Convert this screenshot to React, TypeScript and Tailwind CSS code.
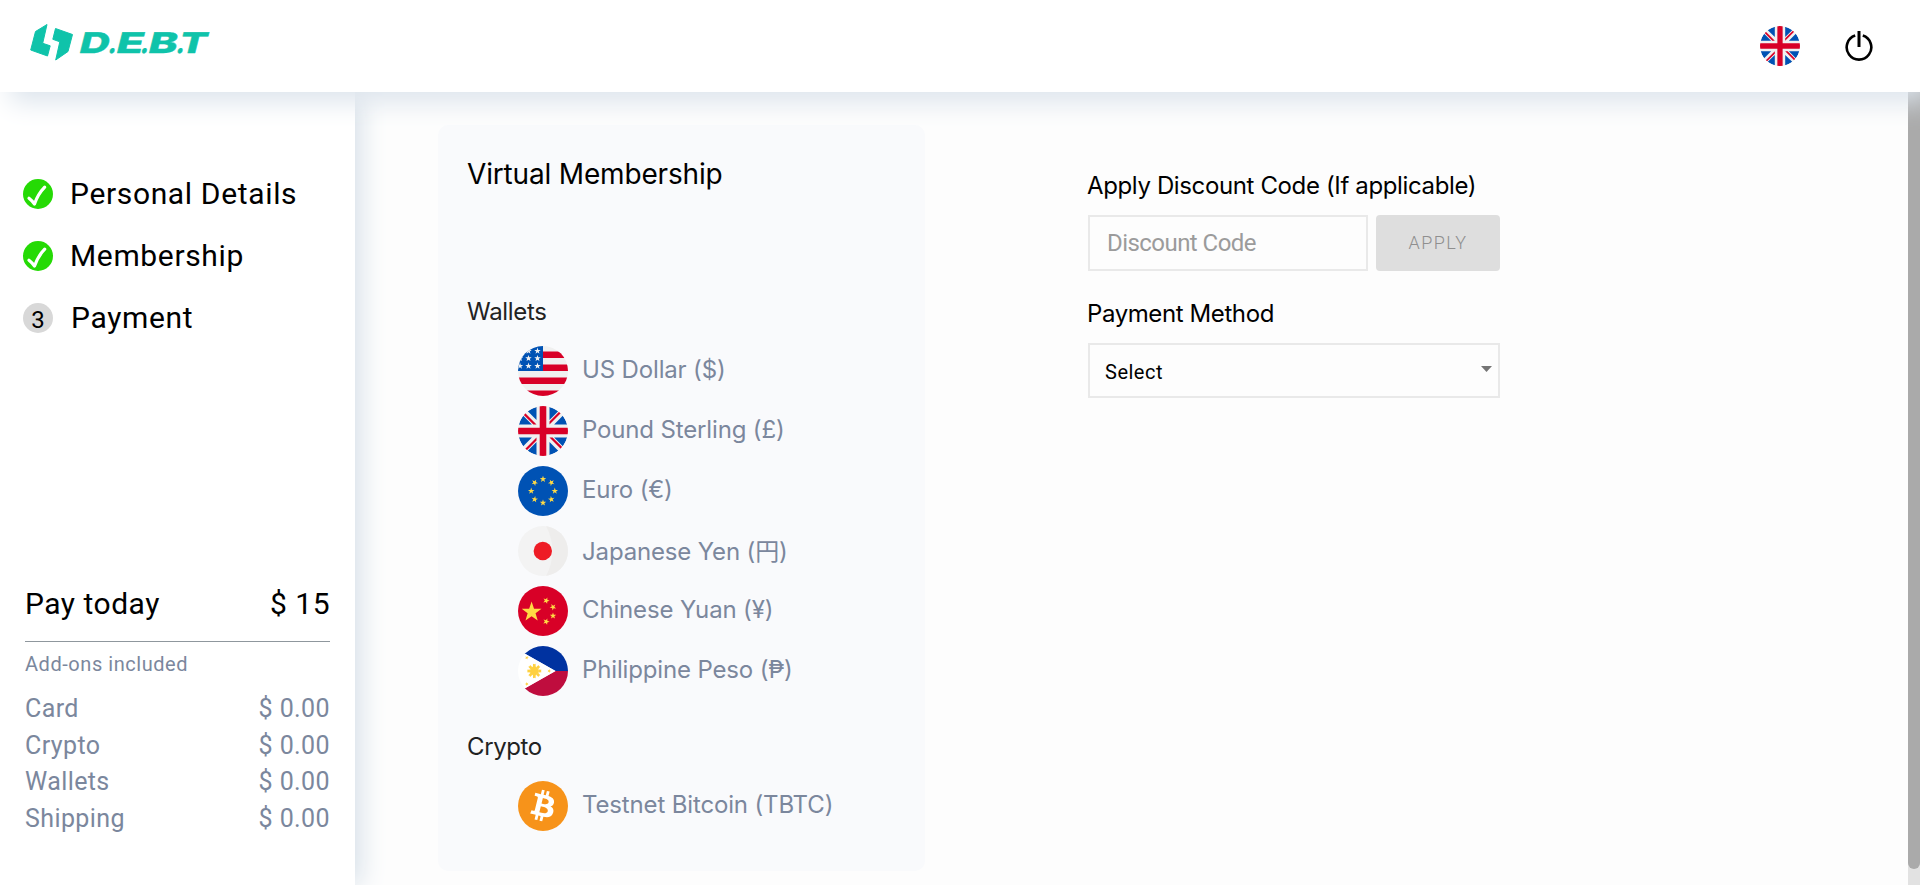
import React from "react";

const star = (cx: number, cy: number, r: number, rot = 0) =>
  Array.from({ length: 10 }, (_, i) => {
    const a = ((i * 36 - 90 + rot) * Math.PI) / 180;
    const q = i % 2 ? r * 0.4 : r;
    return `${cx + q * Math.cos(a)},${cy + q * Math.sin(a)}`;
  }).join(" ");

function Disc({ id, size, children }: { id: string; size: number; children: React.ReactNode }) {
  return (
    <svg width={size} height={size} viewBox="0 0 50 50" className="block shrink-0">
      <clipPath id={id}>
        <circle cx="25" cy="25" r="25" />
      </clipPath>
      <g clipPath={`url(#${id})`}>{children}</g>
    </svg>
  );
}

const UK = ({ id, size = 50 }: { id: string; size?: number }) => (
  <Disc id={id} size={size}>
    <rect width="50" height="50" fill="#f0f0f0" />
    <path fill="#0052b4" d="M5.2 9.8A25 25 0 0 0 0.9 18.5H13.9zM49.1 18.5A25 25 0 0 0 44.8 9.8L36.1 18.5zM0.9 31.5A25 25 0 0 0 5.2 40.2L13.9 31.5zM40.2 5.2A25 25 0 0 0 31.5 0.9V13.9zM9.8 44.8A25 25 0 0 0 18.5 49.1V36.1zM18.5 0.9A25 25 0 0 0 9.8 5.2L18.5 13.9zM31.5 49.1A25 25 0 0 0 40.2 44.8L31.5 36.1zM36.1 31.5L44.8 40.2A25 25 0 0 0 49.1 31.5z" />
    <path fill="#d80027" d="M21.7 0h6.6v21.7H50v6.6H28.3V50h-6.6V28.3H0v-6.6h21.7z" />
    <path fill="#d80027" d="M31.5 31.5L42.7 42.7L44.2 41.1L34.6 31.5zM18.5 31.5L7.3 42.7L8.9 44.2L18.5 34.6zM18.5 18.5L7.3 7.3L5.8 8.9L15.4 18.5zM31.5 18.5L42.7 7.3L41.1 5.8L31.5 15.4z" />
  </Disc>
);

const US = () => (
  <Disc id="us" size={50}>
    <rect width="50" height="50" fill="#f0f0f0" />
    <path fill="#d80027" d="M23 5.4h27v6.6H23zM23 18.4h27v6.6H23zM0 31.5h50v6.5H0zM0 44.5h50V50H0z" />
    <rect width="25" height="25" fill="#0052b4" />
    <g fill="#f0f0f0">
      {[[10.5, 5], [19.5, 5], [2, 12.3], [10.5, 12.3], [19.5, 12.3], [2, 20], [10.5, 20], [19.5, 20]].map(([x, y], i) => (
        <polygon key={i} points={star(x, y, 3.4)} />
      ))}
    </g>
  </Disc>
);

const EU = () => (
  <Disc id="eu" size={50}>
    <rect width="50" height="50" fill="#0052b4" />
    <g fill="#ffda44">
      {[0, 45, 90, 135, 180, 225, 270, 315].map((d) => (
        <polygon key={d} points={star(25 + 11.8 * Math.sin((d * Math.PI) / 180), 25 - 11.8 * Math.cos((d * Math.PI) / 180), 3.4, d % 90 ? d : 0)} />
      ))}
    </g>
  </Disc>
);

const JP = () => (
  <Disc id="jp" size={50}>
    <rect width="50" height="50" fill="#f3f3f3" />
    <path d="M28 0Q41 25 28 50H50V0z" fill="#eeedec" />
    <circle cx="24.8" cy="25" r="9.2" fill="#ee1c25" />
  </Disc>
);

const CN = () => (
  <Disc id="cn" size={50}>
    <rect width="50" height="50" fill="#d80027" />
    <g fill="#ffda44">
      <polygon points={star(13.6, 26, 10.4)} />
      <polygon points={star(28.2, 14.6, 3.4, 20)} />
      <polygon points={star(35, 21, 3.4, 42)} />
      <polygon points={star(35, 29.8, 3.4, 0)} />
      <polygon points={star(28.2, 35.6, 3.4, 20)} />
    </g>
  </Disc>
);

const PH = () => (
  <Disc id="ph" size={50}>
    <path d="M0 0H50V25H37.5L0 3.8z" fill="#0032a0" />
    <path d="M0 50H50V25H37.5L0 46.2z" fill="#bf0d3e" />
    <path d="M0 3.8L37.5 25L0 46.2z" fill="#fff" />
    <g fill="#fed141">
      <circle cx="16.3" cy="25" r="4.4" />
      {[0, 45, 90, 135, 180, 225, 270, 315].map((d) => (
        <path key={d} transform={`rotate(${d} 16.3 25)`} d="M14.9 21L15 17.8L16.3 18.3L17.6 17.8L17.7 21z" />
      ))}
      <polygon points={star(8.8, 11.7, 2, 20)} />
      <polygon points={star(8.8, 38, 2, -20)} />
      <polygon points={star(31.2, 25, 2, 18)} />
    </g>
  </Disc>
);

const BTC = () => (
  <svg width="50" height="50" viewBox="0 0 64 64" className="block shrink-0">
    <circle cx="32" cy="32" r="32" fill="#f7931a" />
    <path
      fill="#fff"
      d="M46.1 27.4c.64-4.26-2.6-6.55-7.04-8.08l1.44-5.76-3.51-.87-1.4 5.61c-.92-.23-1.87-.45-2.81-.66l1.41-5.65-3.5-.87-1.44 5.76c-.76-.17-1.51-.35-2.24-.53l-4.84-1.21-.93 3.75s2.6.6 2.55.63c1.42.35 1.68 1.29 1.63 2.04l-3.93 15.78c-.17.43-.62 1.08-1.61.83.04.05-2.55-.64-2.55-.64l-1.74 4.02 4.56 1.14c.85.21 1.68.43 2.5.64l-1.45 5.83 3.5.87 1.44-5.76c.96.26 1.88.5 2.79.72l-1.43 5.74 3.51.87 1.45-5.81c5.98 1.13 10.48.67 12.37-4.74 1.53-4.35-.07-6.87-3.22-8.5 2.29-.53 4.02-2.04 4.48-5.15zM38.1 38.63c-1.09 4.36-8.42 2-10.8 1.41l1.93-7.73c2.38.6 10 1.77 8.87 6.32zM39.18 27.34c-.99 3.96-7.09 1.95-9.07 1.46l1.75-7.01c1.98.49 8.36 1.41 7.32 5.55z"
    />
  </svg>
);

const wordmark: [string, number, number][] = [
  ["D", -2, 30],
  [".", 27.6, 8.5],
  ["E", 35, 27],
  [".", 59.8, 8.5],
  ["B", 67, 29],
  [".", 95.6, 8.5],
  ["T", 97.5, 28],
];

const Logo = () => (
  <svg width="190" height="40" viewBox="0 0 190 40" className="block" fill="#0fc3aa" stroke="#0fc3aa" strokeLinejoin="round">
    <path d="M17 1.5L5.5 8.5L0.7 27L17.5 33L20.2 22.8L12.7 20.3z" strokeWidth="1" />
    <path d="M25.5 5.5L42.5 11.5L38 28.5L25.7 37L29.8 18.8L22.8 16.3z" strokeWidth="1" />
    <g transform="translate(49.7 29.8) skewX(-14)" className="font-['Inter',sans-serif] text-[28.5px] font-extrabold" strokeWidth="0.4">
      {wordmark.map(([c, x, w]) => (
        <text key={x} x={x} textLength={w} lengthAdjust="spacingAndGlyphs">{c}</text>
      ))}
    </g>
  </svg>
);

function Check() {
  return (
    <svg width="30" height="30" viewBox="0 0 30 30" className="block shrink-0">
      <circle cx="15" cy="15" r="15" fill="#25da05" />
      <path d="M6 19.2Q9 21.5 11.5 25Q15 15 21.7 8.2" fill="none" stroke="#fff" strokeWidth="3.2" strokeLinecap="round" strokeLinejoin="round" />
    </svg>
  );
}

const wallets = [
  { icon: <US />, label: "US Dollar ($)" },
  { icon: <UK id="gb" />, label: "Pound Sterling (£)" },
  { icon: <EU />, label: "Euro (€)" },
  { icon: <JP />, label: "Japanese Yen (円)", low: true },
  { icon: <CN />, label: "Chinese Yuan (¥)" },
  { icon: <PH />, label: "Philippine Peso (₱)" },
];

function Row({ icon, label, low }: { icon: React.ReactNode; label: string; low?: boolean }) {
  return (
    <div className="flex h-[60px] items-start pl-[50px]">
      {icon}
      <span className={`ml-[14px] text-2xl leading-10 tracking-[-0.15px] text-[#7b879d] ${low ? "pt-[6px]" : "pt-[4px]"}`}>{label}</span>
    </div>
  );
}

export default function App() {
  return (
    <div className="flex h-[885px] w-[1920px] flex-col overflow-hidden bg-[#fdfdfd] font-['Inter','Noto_Sans_CJK_JP',sans-serif]">
      <header className="relative z-20 flex h-[92px] shrink-0 items-start justify-between bg-white pl-[30px] shadow-[10px_10px_25px_#dce4ec]">
        <div className="pt-[23px]"><Logo /></div>
        <div className="flex items-start">
          <div className="mr-[45px] mt-[26px]"><UK id="lang" size={40} /></div>
          <svg width="28" height="32" viewBox="0 0 28 32" className="mr-[47px] mt-[30px] block" fill="none" stroke="#000" strokeWidth="2.6">
            <path d="M10.2 5.6A12.3 12.3 0 1 0 17.8 5.6" />
            <path d="M14 1V17" strokeWidth="3" />
          </svg>
        </div>
      </header>
      <div className="flex min-h-0 flex-1">
        <aside className="relative z-10 flex w-[355px] shrink-0 flex-col bg-white shadow-[5px_0_25px_#d5dfe8] font-['Roboto',sans-serif]">
          <ol className="flex flex-col pl-[23px] pt-[71px] text-[30px] leading-[62px] tracking-[0.65px] text-black">
            <li className="flex h-[62px] items-center"><Check /><span className="ml-[17px]">Personal Details</span></li>
            <li className="flex h-[62px] items-center"><Check /><span className="ml-[17px]">Membership</span></li>
            <li className="flex h-[62px] items-center">
              <span className="flex size-[30px] items-center justify-center rounded-full bg-[#d8d8d8] pt-[3px] text-2xl leading-none tracking-normal">3</span>
              <span className="ml-[18px]">Payment</span>
            </li>
          </ol>
          <div className="mt-[214px] pl-[25px] pr-[25px]">
            <div className="flex h-[79px] justify-between border-b border-[#8f979d] text-[30px] leading-[81px] tracking-[0.5px] text-black">
              <span>Pay today</span><span>$ 15</span>
            </div>
            <div className="mt-[7px] text-xl leading-[30px] tracking-[0.55px] text-[#7b879d]">Add-ons included</div>
            <div className="mt-[12px] text-[25px] leading-[36.5px] tracking-[0.4px] text-[#7b879d]">
              {["Card", "Crypto", "Wallets", "Shipping"].map((n) => (
                <div key={n} className="flex justify-between"><span>{n}</span><span>$ 0.00</span></div>
              ))}
            </div>
          </div>
        </aside>
        <main className="flex flex-1 items-start pl-[83px] pt-[33px]">
          <section className="h-[746px] w-[487px] rounded-[10px] bg-[#f9fafc] pl-[30px] pt-[29px]">
            <h1 className="-ml-px text-[28px] leading-10 tracking-[-0.17px] text-black">Virtual Membership</h1>
            <h2 className="-ml-px mt-[98px] text-2xl leading-10 tracking-[-0.3px] text-[#222]">Wallets</h2>
            <div className="mt-[14px]">{wallets.map((w) => <Row key={w.label} {...w} />)}</div>
            <h2 className="-ml-px mt-[21px] text-2xl leading-10 tracking-[-0.4px] text-[#222]">Crypto</h2>
            <div className="mt-[14px]"><Row icon={<BTC />} label="Testnet Bitcoin (TBTC)" /></div>
          </section>
          <section className="ml-[163px] w-[412px] pt-[41px]">
            <label className="-ml-px block text-2xl leading-10 tracking-[-0.37px] text-black">Apply Discount Code (If applicable)</label>
            <div className="mt-[9px] flex justify-between font-['Roboto',sans-serif]">
              <div className="h-[56px] w-[280px] border-2 border-[#e9e9e9] pl-[17px] text-2xl leading-[53px] tracking-[-0.55px] text-[#9b9b9b]">Discount Code</div>
              <button className="h-[56px] w-[124px] rounded bg-[#dedede] text-lg font-light tracking-[1.5px] text-[#8f8f8f]">APPLY</button>
            </div>
            <label className="-ml-px mt-[23px] block text-2xl leading-10 tracking-[-0.4px] text-black">Payment Method</label>
            <div className="mt-[9px] flex h-[55px] items-center justify-between border-2 border-[#e9e9e9] pl-[15px] pr-[6px] font-['Roboto',sans-serif] text-xl tracking-[0.5px] text-black">
              <span className="pt-[2px]">Select</span>
              <svg width="11" height="6" viewBox="0 0 11 6" className="mb-[3px]"><path d="M0 0H11L5.5 6z" fill="#757575" /></svg>
            </div>
          </section>
        </main>
        <div className="w-3 shrink-0 bg-[#e2e2e2]">
          <div className="h-[777px] rounded-b-full bg-[#aaa]" />
        </div>
      </div>
    </div>
  );
}
